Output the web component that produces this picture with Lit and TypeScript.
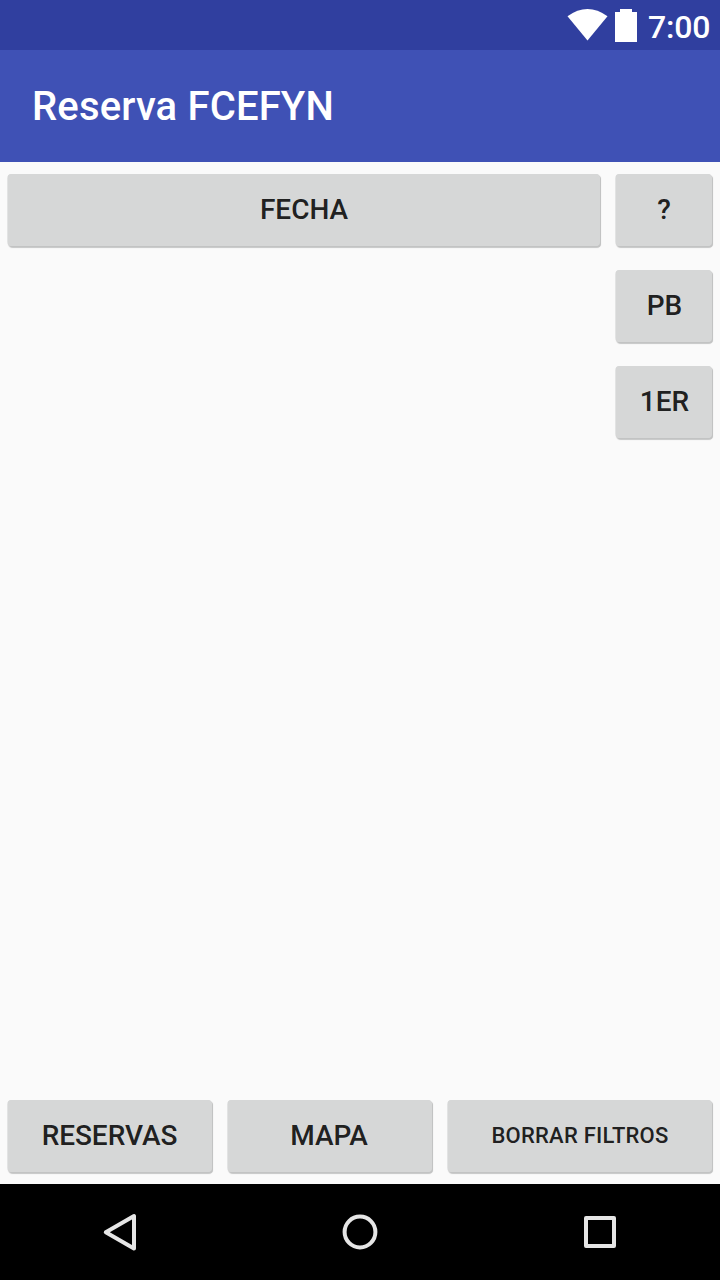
import { LitElement, html, css } from "lit";
import { customElement } from "lit/decorators.js";

@customElement("app-root")
export class AppRoot extends LitElement {
  static styles = css`
    :host { display: flex; flex-direction: column; width: 720px; height: 1280px; background: #fafafa; font-family: Roboto, sans-serif; overflow: hidden; }
    * { box-sizing: border-box; }
    .status { height: 50px; flex: none; background: #303f9f; display: flex; justify-content: flex-end; color: #fff; }
    .status svg { flex: none; }
    .clock { width: 73px; padding: 8px 0 0 1px; font-size: 32px; font-weight: 500; line-height: 38px; white-space: nowrap; letter-spacing: -0.2px; }
    .bar { height: 112px; flex: none; background: #3f51b5; color: #fff; display: flex; align-items: center; padding-left: 32px; font-size: 40px; font-weight: 500; letter-spacing: 0.16px; }
    .main { flex: 1; display: flex; flex-direction: column; justify-content: space-between; padding: 12px 8px; }
    .top { display: flex; gap: 16px; align-items: flex-start; }
    .side { display: flex; flex-direction: column; gap: 24px; width: 96px; }
    .bottom { display: grid; grid-template-columns: 204px 204px 264px; gap: 16px; }
    button { height: 72px; border: 0; border-radius: 4px; margin: 0; padding: 0 0 2px; background: #d6d7d7; color: rgba(0, 0, 0, 0.87); font: 500 28px Roboto, sans-serif; box-shadow: -0.6px 0 0 #d6d7d7, 1px 1.5px 0 #c2c3c3, 0.5px 1.5px 1px 0.5px #cfcfcf; white-space: nowrap; }
    .wide { flex: 1; }
    .floor { padding-left: 1px; }
    .reservas { letter-spacing: -0.05px; padding-right: 1px; }
    .mapa { padding-right: 2px; }
    .small { font-size: 22px; letter-spacing: 0.22px; }
    .nav { height: 96px; flex: none; background: #000; display: grid; grid-template-columns: repeat(3, 240px); justify-items: center; }
  `;
  render() {
    return html`
      <header class="status">
        <svg width="80" height="50" viewBox="567 0 80 50" fill="#fff"><path d="M567.5 16.3Q587.5 1.7 607.5 16.3L587.5 40.5Z"/><path d="M620 9h12v3h5v30h-22V12h5Z"/></svg>
        <span class="clock">7:00</span>
      </header>
      <div class="bar">Reserva FCEFYN</div>
      <main class="main">
        <div class="top">
          <button class="wide">FECHA</button>
          <div class="side"><button>?</button><button class="floor">PB</button><button class="floor">1ER</button></div>
        </div>
        <div class="bottom"><button class="reservas">RESERVAS</button><button class="mapa">MAPA</button><button class="small">BORRAR FILTROS</button></div>
      </main>
      <nav class="nav">
        <svg width="96" height="96" viewBox="72 0 96 96" fill="none" stroke="#e6e6e6" stroke-width="4" stroke-linejoin="round"><path d="M134 32V64.5L105.8 48.2Z"/></svg>
        <svg width="96" height="96" viewBox="312 0 96 96" fill="none" stroke="#e6e6e6" stroke-width="4"><circle cx="360" cy="48" r="15.4"/></svg>
        <svg width="96" height="96" viewBox="552 0 96 96" fill="none" stroke="#e6e6e6" stroke-width="4" stroke-linejoin="round"><path d="M586 34h28v28h-28Z"/></svg>
      </nav>`;
  }
}
